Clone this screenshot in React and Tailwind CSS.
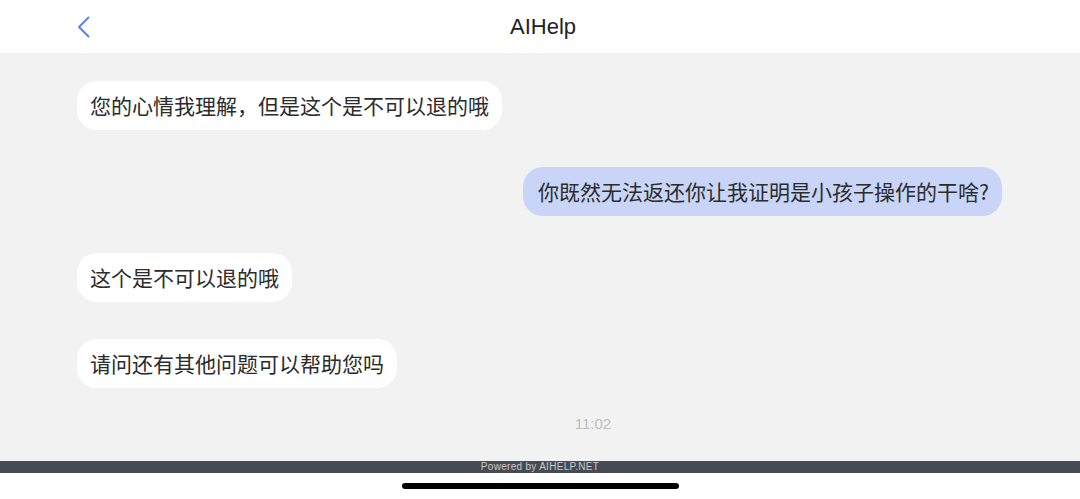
import React from "react";

const font = { fontFamily: '"Noto Sans", "Noto Sans CJK SC", sans-serif' };

function Bubble({ children, mine }) {
  return (
    <div className={mine ? "flex justify-end" : "flex justify-start"}>
      <div
        className={
          (mine ? "bg-[#c9d5f8] pl-[15px] pr-[13px] " : "bg-white px-[13px] ") +
          "rounded-[20px] py-[12px] text-[21px] leading-[25px] text-[#2b2b2b] font-['Noto_Sans_CJK_SC',sans-serif]"
        }
      >
        {children}
      </div>
    </div>
  );
}

export default function App() {
  return (
    <div className="w-[1080px] h-[499px] flex flex-col bg-white overflow-hidden" style={font}>
      <div className="h-[53px] shrink-0 flex items-center relative bg-white">
        <div className="absolute left-[76px] top-[15px]">
          <svg width="16" height="24" viewBox="0 0 16 24" fill="none">
            <path d="M12.5 2.5 L3 12 L12.5 21.5" stroke="#5b82ee" strokeWidth="2" strokeLinecap="round" strokeLinejoin="round" />
          </svg>
        </div>
        <div className="flex-1 text-center text-[22px] text-[#222] font-['Liberation_Sans',sans-serif] pl-[6px]">AIHelp</div>
      </div>
      <div className="flex-1 bg-[#f2f2f2] flex flex-col px-[77px] pt-[28px] gap-[37px] font-['Noto_Sans_CJK_SC',sans-serif]">
        <Bubble>您的心情我理解，但是这个是不可以退的哦</Bubble>
        <div className="pr-px">
          <Bubble mine>你既然无法返还你让我证明是小孩子操作的干啥?</Bubble>
        </div>
        <Bubble>这个是不可以退的哦</Bubble>
        <Bubble>请问还有其他问题可以帮助您吗</Bubble>
        <div className="-mt-[12px] text-center pl-[106px] text-[15px] text-[#bdbdbd] font-['Liberation_Sans',sans-serif]">11:02</div>
      </div>
      <div className="h-[12px] shrink-0 bg-[#464a52] flex items-center justify-center text-[10px] leading-[12px] text-[#c9cbd0] font-['Liberation_Sans',sans-serif] tracking-[0.3px]">
        Powered by AIHELP.NET
      </div>
      <div className="h-[26px] shrink-0 bg-white flex justify-center pt-[10px]">
        <div className="w-[277px] h-[6px] rounded-full bg-black" />
      </div>
    </div>
  );
}
